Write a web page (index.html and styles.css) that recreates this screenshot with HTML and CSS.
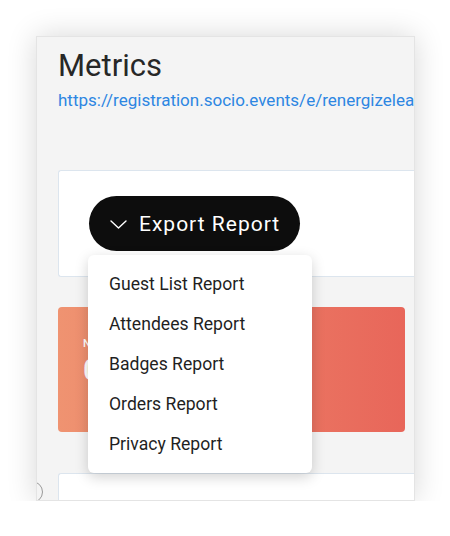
FILE: index.html
```html
<!DOCTYPE html>
<html>
  <head>
    <meta charset="utf-8" />
    <title>Metrics</title>
    <link rel="stylesheet" href="styles.css">
  </head>
  <body>
    <div class="shot">
      <h1 class="page-title">Metrics</h1>
      <a class="event-link" href="#">https://registration.socio.events/e/renergizeleaders2024</a>

      <section class="card export-card">
        <button class="export-btn" type="button">
          <svg class="chevron" width="17" height="9" viewBox="0 0 17 9">
            <path d="M1 1 L8.5 8 L16 1" fill="none" stroke="#fff" stroke-width="1.4" stroke-linecap="round" stroke-linejoin="round" />
          </svg>
          Export Report
        </button>
      </section>

      <section class="stat-card">
        <div class="stat-label">NET SALES</div>
        <div class="stat-value">0</div>
      </section>

      <section class="card bottom-card"></section>

      <span class="help-ring"></span>

      <ul class="menu">
        <li>Guest List Report</li>
        <li>Attendees Report</li>
        <li>Badges Report</li>
        <li>Orders Report</li>
        <li>Privacy Report</li>
      </ul>
    </div>
  </body>
</html>
```

FILE: styles.css
```css
* {
  box-sizing: border-box;
}
html,
body {
  margin: 0;
  padding: 0;
  background: #fff;
  font-family: Roboto, "Liberation Sans", sans-serif;
}
.shot {
  position: relative;
  width: 379px;
  height: 465px;
  margin: 36px 0 0 36px;
  padding: 11px 0 0 21px;
  background: #f4f4f4;
  border: 1px solid #e4e4e4;
  box-shadow: 0 0 28px rgba(0, 0, 0, 0.16);
  overflow: hidden;
}
.page-title {
  margin: 0;
  font-size: 31px;
  line-height: 36px;
  font-weight: 400;
  color: #272727;
}
.event-link {
  display: block;
  margin-top: 6px;
  font-size: 17px;
  line-height: 20px;
  color: #2d86e2;
  text-decoration: none;
  white-space: nowrap;
}
.card {
  background: #fff;
  border: 1px solid #dce5ee;
  border-right: none;
  border-radius: 3px 0 0 3px;
}
.export-card {
  margin-top: 60px;
  height: 107px;
  padding: 25px 30px;
}
.export-btn {
  display: flex;
  align-items: center;
  gap: 12px;
  height: 55px;
  padding: 0 20px 0 21px;
  border: none;
  border-radius: 28px;
  background: #0d0d0d;
  color: #fff;
  font-family: Roboto, "Liberation Sans", sans-serif;
  font-size: 21px;
  font-weight: 400;
  letter-spacing: 1px;
}
.chevron {
  display: block;
  margin-top: 1px;
}
.stat-card {
  width: 347px;
  height: 125px;
  margin-top: 30px;
  padding: 30px 25px;
  border-radius: 4px;
  background: linear-gradient(90deg, #ef9371, #e8665a);
  color: #fff;
}
.stat-label {
  font-size: 11px;
  font-weight: 500;
  letter-spacing: 0.5px;
}
.stat-value {
  margin-top: 2px;
  font-size: 30px;
  font-weight: 500;
}
.bottom-card {
  height: 60px;
  margin-top: 41px;
}
.help-ring {
  position: absolute;
  left: -16px;
  top: 444px;
  width: 22px;
  height: 22px;
  border: 1.5px solid #9a9a9a;
  border-radius: 50%;
}
.menu {
  position: absolute;
  left: 51px;
  top: 218px;
  width: 224px;
  margin: 0;
  padding: 9px 0;
  list-style: none;
  background: #fff;
  border-radius: 6px;
  box-shadow: 0 4px 14px rgba(0, 0, 0, 0.18);
}
.menu li {
  height: 40px;
  padding-left: 21px;
  font-size: 17.6px;
  line-height: 40px;
  color: #1f1f1f;
}
```
